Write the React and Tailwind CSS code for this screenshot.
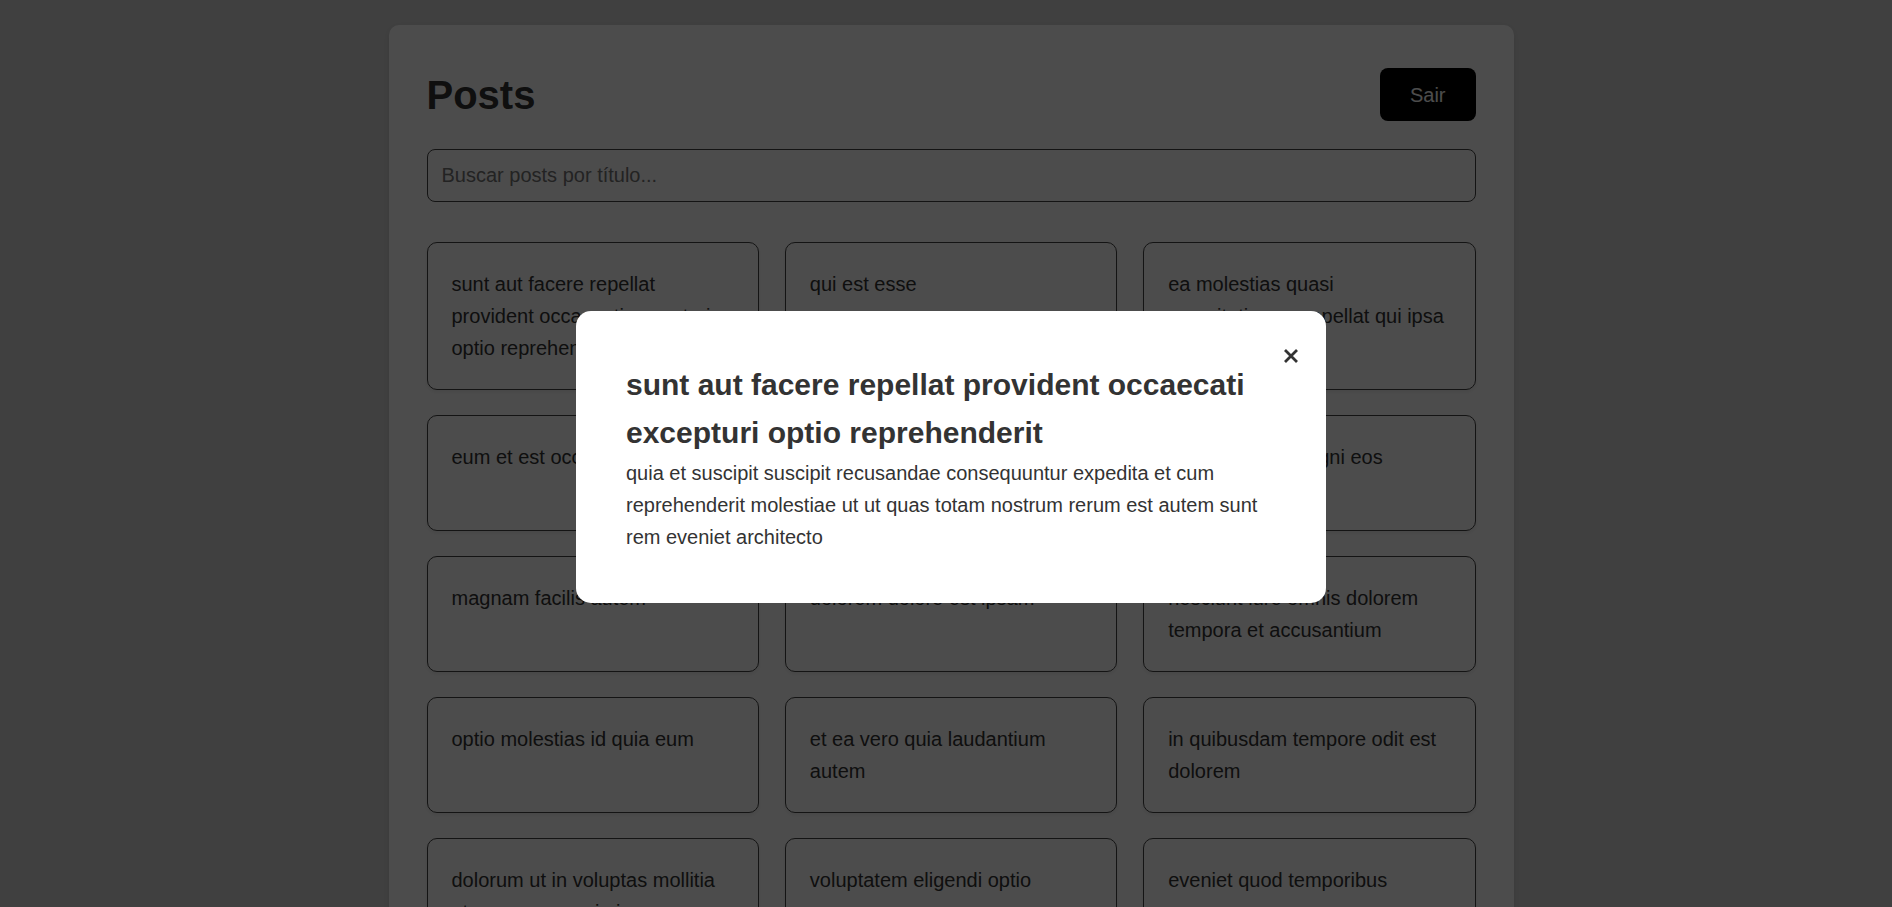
const POSTS = [
  {
    id: 1,
    title: 'sunt aut facere repellat provident occaecati excepturi optio reprehenderit',
    body: 'quia et suscipit suscipit recusandae consequuntur expedita et cum reprehenderit molestiae ut ut quas totam nostrum rerum est autem sunt rem eveniet architecto',
  },
  { id: 2, title: 'qui est esse' },
  { id: 3, title: 'ea molestias quasi exercitationem repellat qui ipsa sit aut' },
  { id: 4, title: 'eum et est occaecati' },
  { id: 5, title: 'nesciunt quas odio' },
  { id: 6, title: 'dolorem eum magni eos aperiam quia' },
  { id: 7, title: 'magnam facilis autem' },
  { id: 8, title: 'dolorem dolore est ipsam' },
  { id: 9, title: 'nesciunt iure omnis dolorem tempora et accusantium' },
  { id: 10, title: 'optio molestias id quia eum' },
  { id: 11, title: 'et ea vero quia laudantium autem' },
  { id: 12, title: 'in quibusdam tempore odit est dolorem' },
  { id: 13, title: 'dolorum ut in voluptas mollitia et saepe quo animi' },
  { id: 14, title: 'voluptatem eligendi optio' },
  { id: 15, title: 'eveniet quod temporibus' },
]

function PostCard({ post }) {
  return (
    <div className="rounded-[10px] border border-[#444] bg-white px-6 py-[25px] text-[20px] leading-[32px] text-[#333] shadow-[0_2px_4px_rgba(0,0,0,0.08)]">
      {post.title}
    </div>
  )
}

function PostModal({ post }) {
  return (
    <div className="fixed inset-0 flex items-center justify-center bg-black/70 pl-[10px] pt-[6px]">
      <div className="relative w-[750px] rounded-[15px] bg-white p-[50px] text-[#333]">
        <button
          type="button"
          aria-label="Fechar"
          className="absolute right-[28px] top-[38px] flex h-[14px] w-[14px] items-center justify-center"
        >
          <svg width="14" height="14" viewBox="0 0 14 14" fill="none">
            <path d="M1 1L13 13M13 1L1 13" stroke="#333" strokeWidth="2.8" />
          </svg>
        </button>
        <h2 className="text-[30px] font-bold leading-[48px]">{post.title}</h2>
        <p className="text-[20px] leading-[32px]">{post.body}</p>
      </div>
    </div>
  )
}

export default function App() {
  const selected = POSTS[0]

  return (
    <div className="relative h-screen overflow-hidden bg-[#d8d8d8] font-['Liberation_Sans',Arial,sans-serif]">
      <div className="pl-[10px] pt-[25px]">
        <div className="mx-auto w-[1125px] rounded-[10px] bg-white px-[38px] pb-10 pt-[43px] shadow-[0_2px_10px_rgba(0,0,0,0.1)]">
          <div className="flex items-center justify-between">
            <h1 className="text-[40px] font-bold leading-[46px] text-[#333]">Posts</h1>
            <button
              type="button"
              className="h-[53px] rounded-[8px] bg-black px-[30px] text-[20px] text-white"
            >
              Sair
            </button>
          </div>

          <input
            type="text"
            placeholder="Buscar posts por título..."
            className="mt-[28px] block h-[53px] w-full rounded-[8px] border border-[#444] px-[14px] text-[20px] text-[#333] placeholder:text-[#757575] focus:outline-none"
          />

          <div className="mt-[40px] grid grid-cols-3 gap-x-[26px] gap-y-[25px]">
            {POSTS.map((post) => (
              <PostCard key={post.id} post={post} />
            ))}
          </div>
        </div>
      </div>

      <PostModal post={selected} />
    </div>
  )
}
